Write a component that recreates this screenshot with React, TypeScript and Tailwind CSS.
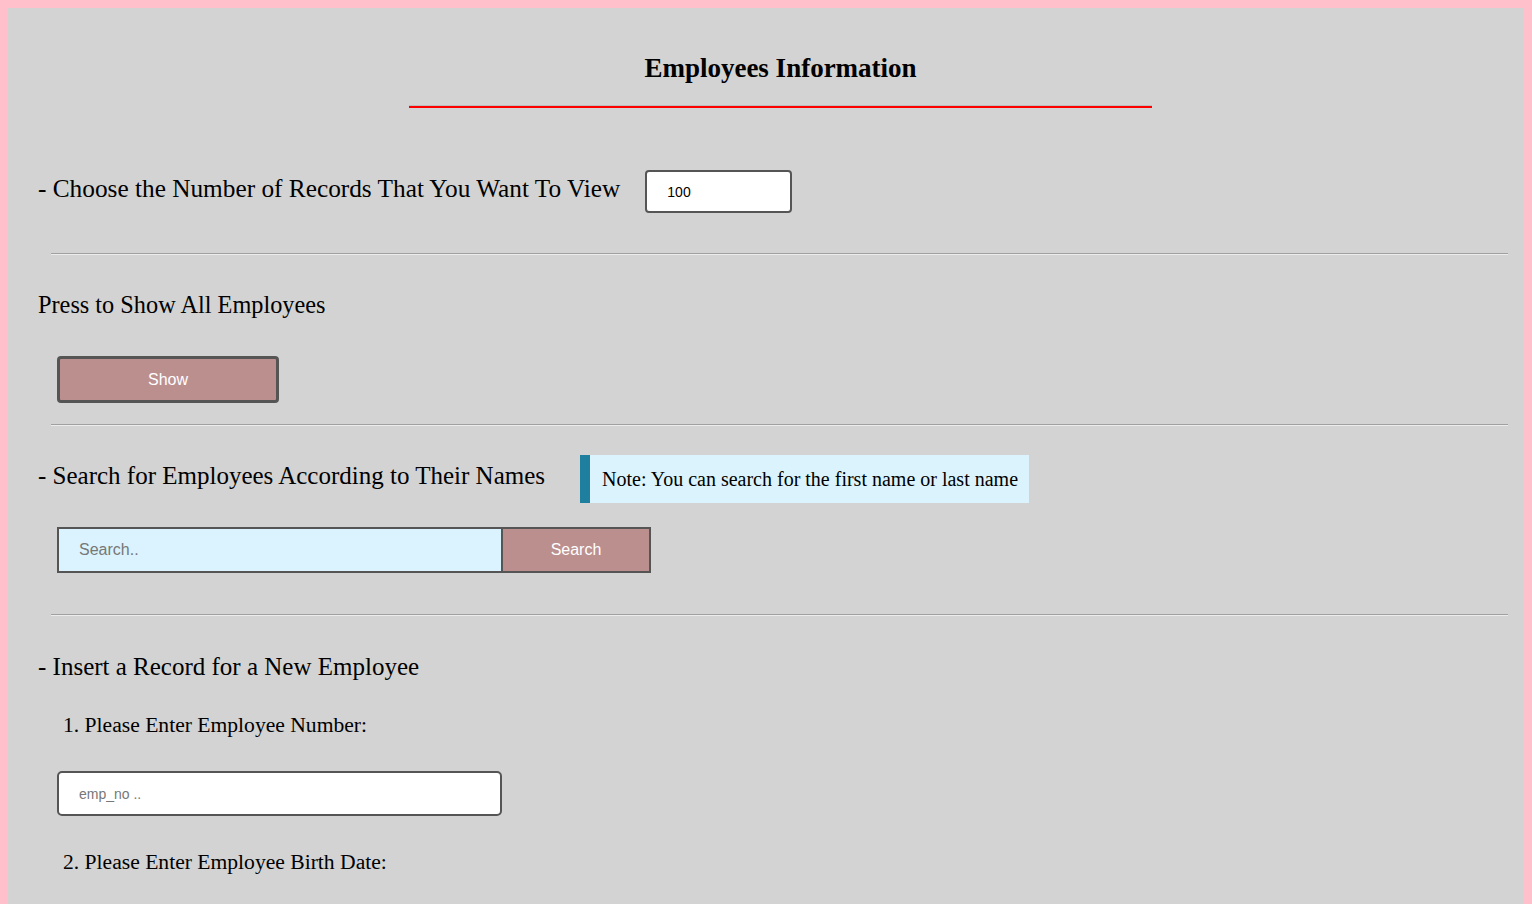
export default function App() {
  const serif = "font-['Liberation_Serif',serif]"
  const sans = "font-['Liberation_Sans',Arial,sans-serif]"

  return (
    <div className="min-h-screen bg-[#ffc0cb] pl-[8px] pr-[9px] pt-[8px]">
      <div className={`min-h-[896px] bg-[#d3d3d3] pl-[30px] pt-[40px] pb-[40px] text-black ${serif}`}>
        {/* Title */}
        <h1 className="h-[40px] text-center text-[27px] font-bold leading-[40px]">Employees Information</h1>
        <div className="mx-auto mt-[17px] w-1/2">
          <div className="h-px bg-[#bdbdbd]" />
          <div className="h-[2px] bg-[#ff0000]" />
        </div>

        {/* Number of records */}
        <div className="mt-[62px] flex items-start">
          <p className="text-[25.3px] leading-[36px]">- Choose the Number of Records That You Want To View</p>
          <input
            type="text"
            defaultValue="100"
            className={`ml-[25px] h-[43px] w-[147px] rounded-[4px] border-2 border-[#555] bg-white px-[20px] text-[14px] text-black outline-none ${sans}`}
          />
        </div>

        <Divider className="mt-[40px]" />

        {/* Show all */}
        <p className="mt-[32px] text-[24.3px] leading-[36px]">Press to Show All Employees</p>
        <button
          className={`ml-[19px] mt-[33px] block h-[47px] w-[222px] rounded-[4px] border-[3px] border-[#555] bg-[#bc8f8f] text-[16px] text-white ${sans}`}
        >
          Show
        </button>

        <Divider className="mt-[21px]" />

        {/* Search */}
        <div className="mt-[29px] flex items-start">
          <p className="mt-[3px] text-[25px] leading-[36px]">- Search for Employees According to Their Names</p>
          <div className="ml-[35px] flex h-[48px] items-center border-l-[10px] border-[#1f7f9f] bg-[#dbf3fd] pl-[12px] pr-[11px] text-[20px]">
            Note: You can search for the first name or last name
          </div>
        </div>
        <div className="ml-[19px] mt-[24px] flex h-[46px]">
          <input
            type="text"
            placeholder="Search.."
            className={`h-full w-[446px] border-2 border-[#555] bg-[#daf3fe] px-[20px] text-[16px] outline-none placeholder:text-[#777] ${sans}`}
          />
          <button
            className={`h-full w-[148px] border-2 border-l-0 border-[#555] bg-[#bc8f8f] text-[16px] text-white ${sans}`}
          >
            Search
          </button>
        </div>

        <Divider className="mt-[41px]" />

        {/* Insert */}
        <p className="mt-[33px] text-[25px] leading-[36px]">- Insert a Record for a New Employee</p>
        <p className="ml-[25px] mt-[25px] text-[21.6px] leading-[30px]">1. Please Enter Employee Number:</p>
        <input
          type="text"
          placeholder="emp_no .."
          className={`ml-[19px] mt-[31px] block h-[45px] w-[445px] rounded-[5px] border-2 border-[#555] bg-white px-[20px] text-[14px] outline-none placeholder:text-[#777] ${sans}`}
        />
        <p className="ml-[25px] mt-[31px] text-[21.6px] leading-[30px]">2. Please Enter Employee Birth Date:</p>
        <input
          type="text"
          placeholder="yyyy-mm-dd .."
          className={`ml-[19px] mt-[32px] block h-[45px] w-[445px] rounded-[5px] border-2 border-[#555] bg-white px-[20px] text-[14px] outline-none placeholder:text-[#777] ${sans}`}
        />
      </div>
    </div>
  )
}

function Divider({ className = '' }: { className?: string }) {
  return (
    <div className={`ml-[13px] mr-[15px] ${className}`}>
      <div className="h-px bg-[#a0a0a0]" />
      <div className="h-px bg-[#ececec]" />
    </div>
  )
}
